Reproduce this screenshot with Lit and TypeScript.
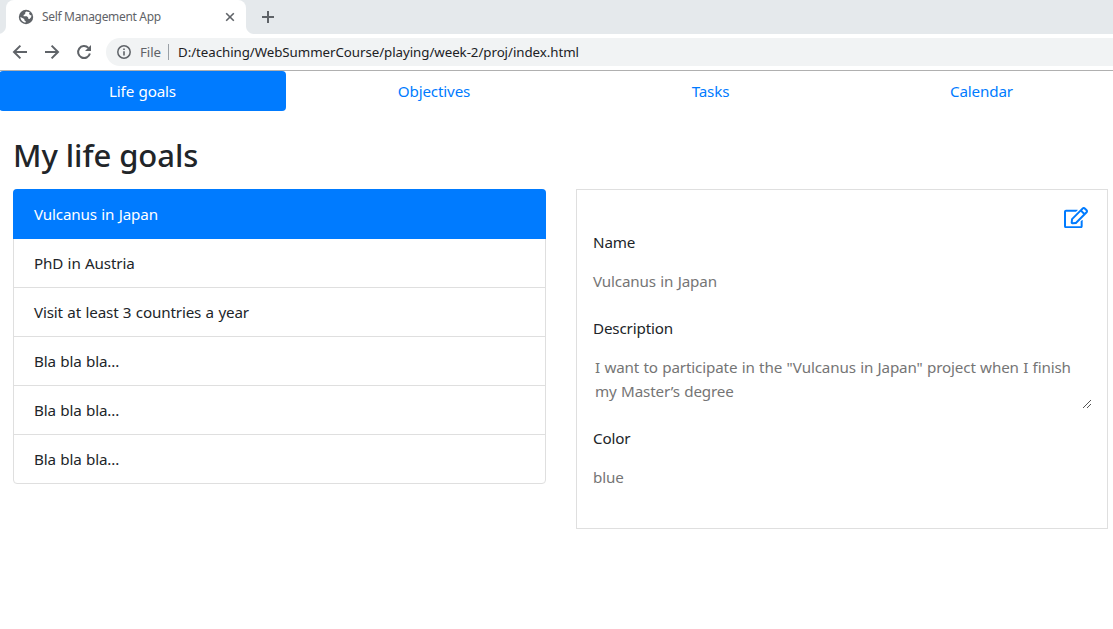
import { LitElement, html, css } from "lit";
import { customElement, state } from "lit/decorators.js";
import { classMap } from "lit/directives/class-map.js";

@customElement("browser-bar")
class BrowserBar extends LitElement {
  static styles = css`
    :host { display: block; height: 71px; box-sizing: border-box; border-bottom: 1px solid #b0b0b0; background: #fff;
      font-family: "Noto Sans", "Open Sans", sans-serif; letter-spacing: 0; word-spacing: 0; }
    .strip { display: flex; height: 34px; background: #e5e9ec; align-items: stretch; }
    .tab { box-sizing: border-box; width: 240px; background: #fff; border-radius: 8px 8px 0 0; display: flex; align-items: center; padding: 0 11px 0 12px; }
    .corner { align-self: flex-end; height: 8px; width: 6px; background: radial-gradient(circle at -2px 0, #e5e9ec 7.5px, #fff 8.5px); }
    .corner-right { align-self: flex-end; height: 8px; width: 8px; background: radial-gradient(circle at 8px 0, #e5e9ec 7.5px, #fff 8.5px); }
    .title { margin-left: 8px; flex: 1; font-size: 12px; color: #5f6368; letter-spacing: -0.32px; white-space: nowrap; }
    .plus { margin: 11px 0 0 8px; }
    svg { display: block; flex: none; }
    .toolbar { display: flex; height: 36px; align-items: center; padding-left: 12px; }
    .nav { margin-right: 16px; }
    .address { flex: 1; height: 28px; background: #f1f3f4; border-radius: 14px 0 0 14px; display: flex; align-items: center; padding-left: 10px; font-size: 13.3px; margin-left: -2px; white-space: nowrap; }
    .scheme { margin-left: 8px; color: #5f6368; width: 20px; letter-spacing: -0.1px; }
    .rule { width: 1px; height: 16px; background: #9aa0a6; margin: 0 9px 0 8px; }
    .url { color: #202124; letter-spacing: -0.05px; }
  `;

  render() {
    return html`
      <div class="strip">
        <div class="corner"></div>
        <div class="tab">
          <svg width="16" height="16" viewBox="0 0 16 16">
            <circle cx="8" cy="8" r="7.2" fill="#5f6368" />
            <path d="M8.3 2.4 7.2 3.6v1.5L5.6 6v1.3h3.2l1.4 1.3v1.2l1.3.3 1.6-1.9.4-1.8-1.5-.3-1-1.3.8-1.5zM2.4 8l3.9 2v1.2l1.4 1v1.4C4.8 13.4 2.4 11 2.4 8z" fill="#fff" />
          </svg>
          <span class="title">Self Management App</span>
          <svg width="10" height="10" viewBox="0 0 10 10"><path d="M1.2 1.2 8.8 8.8M8.8 1.2 1.2 8.8" stroke="#5f6368" stroke-width="1.6" /></svg>
        </div>
        <div class="corner-right"></div>
        <svg class="plus" width="12" height="12" viewBox="0 0 12 12"><path d="M6 0v12M0 6h12" stroke="#5f6368" stroke-width="2" /></svg>
      </div>
      <div class="toolbar">
        <svg class="nav" width="16" height="16" viewBox="0 0 16 16"><path d="M15 8H2.5M8.4 1.6 2 8l6.4 6.4" fill="none" stroke="#5f6368" stroke-width="2" /></svg>
        <svg class="nav" width="16" height="16" viewBox="0 0 16 16"><path d="M1 8h12.5M7.6 1.6 14 8l-6.4 6.4" fill="none" stroke="#5f6368" stroke-width="2" /></svg>
        <svg class="nav" width="16" height="16" viewBox="0 0 16 16">
          <path d="M13.9 9.6A6 6 0 1 1 12.4 3.9" fill="none" stroke="#5f6368" stroke-width="2" /><path d="M15 1v6H9z" fill="#5f6368" />
        </svg>
        <div class="address">
          <svg width="16" height="16" viewBox="0 0 16 16">
            <circle cx="8" cy="8" r="6.2" fill="none" stroke="#5f6368" stroke-width="1.5" /><path d="M8 7.2v4.2M8 4.5v1.6" stroke="#5f6368" stroke-width="1.6" />
          </svg>
          <span class="scheme">File</span><span class="rule"></span>
          <span class="url">D:/teaching/WebSummerCourse/playing/week-2/proj/index.html</span>
        </div>
      </div>`;
  }
}

@customElement("goal-details")
class GoalDetails extends LitElement {
  static styles = css`
    :host { display: block; box-sizing: border-box; height: 340px; border: 1px solid #dfdfdf; padding: 17px 16px 0 16px; line-height: 24px; }
    .actions { display: flex; justify-content: flex-end; height: 23px; padding-right: 3px; }
    .label { height: 24px; color: #212529; }
    .value { color: #757575; height: 24px; margin: 15px 0 23px; }
    .area { color: #757575; display: flex; justify-content: space-between; align-items: flex-end; height: 54px; margin: 14px 0 18px; }
    .copy { align-self: flex-start; padding: 1px 0 0 2px; white-space: nowrap; }
    svg { display: block; flex: none; }
  `;

  render() {
    return html`
      <div class="actions">
        <svg width="24" height="21.33" viewBox="0 0 576 512"><path fill="#007bff" d="M402.3 344.9l32-32c5-5 13.7-1.5 13.7 5.7V464c0 26.5-21.5 48-48 48H48c-26.5 0-48-21.5-48-48V112c0-26.5 21.5-48 48-48h273.5c7.1 0 10.7 8.6 5.7 13.7l-32 32c-1.5 1.5-3.5 2.3-5.7 2.3H48v352h352V350.5c0-2.1.8-4.1 2.3-5.6zm156.6-201.8L296.3 405.7l-90.4 10c-26.2 2.9-48.5-19.2-45.6-45.6l10-90.4L432.9 17.1c22.9-22.9 59.9-22.9 82.7 0l43.2 43.2c22.9 22.9 22.9 60 .1 82.8zM460.1 174L402 115.9 216.2 301.8l-7.3 65.3 65.3-7.3L460.1 174zm64.8-79.7l-43.2-43.2c-4.1-4.1-10.8-4.1-14.8 0L436 82l58.1 58.1 30.9-30.9c4-4.2 4-10.8-.1-14.9z" /></svg>
      </div>
      <div class="label">Name</div>
      <div class="value">Vulcanus in Japan</div>
      <div class="label">Description</div>
      <div class="area">
        <div class="copy">I want to participate in the "Vulcanus in Japan" project when I finish<br />my Master’s degree</div>
        <svg width="8" height="8" viewBox="0 0 8 8"><path d="M0 8 8 0M4 8l4-4" stroke="#555" stroke-width="1" /></svg>
      </div>
      <div class="label">Color</div>
      <div class="value">blue</div>`;
  }
}

@customElement("app-root")
class AppRoot extends LitElement {
  static styles = css`
    :host { display: block; height: 629px; overflow: hidden; background: #fff; color: #212529;
      font: 15.2px/24px "Noto Sans", "Open Sans", sans-serif; letter-spacing: -0.15px; word-spacing: 0.6px; }
    nav { display: grid; grid-template-columns: 287px 296px 257px 285px; margin-left: -1px; height: 40px; }
    .link { color: #007bff; text-align: center; padding: 8px 0; border-radius: 4px; }
    .link.active { color: #fff; background: #007bff; }
    h1 { font-size: 31px; font-weight: 500; line-height: 38px; margin: 25px 13px 15px; letter-spacing: -0.05px; word-spacing: 0; }
    .columns { display: grid; grid-template-columns: 533px 532px; gap: 30px; padding-left: 13px; align-items: start; }
    .list { border: 1px solid #dfdfdf; border-radius: 4px; display: flex; flex-direction: column; }
    .item { padding: 12px 20px; border-top: 1px solid #dfdfdf; }
    .item.active { background: #007bff; color: #fff; margin: -1px -1px 0; padding: 13px 21px 12px; border: 0; border-radius: 4px 4px 0 0; height: 25px; }
    .item.active + .item { border-top: 0; }
  `;

  @state() private tab = 0;
  @state() private goal = 0;

  private tabs = ["Life goals", "Objectives", "Tasks", "Calendar"];
  private goals = ["Vulcanus in Japan", "PhD in Austria", "Visit at least 3 countries a year", "Bla bla bla...", "Bla bla bla...", "Bla bla bla..."];

  render() {
    return html`
      <browser-bar></browser-bar>
      <nav>${this.tabs.map((t, i) => html`<div class=${classMap({ link: true, active: i === this.tab })} @click=${() => (this.tab = i)}>${t}</div>`)}</nav>
      <h1>My life goals</h1>
      <div class="columns">
        <div class="list">${this.goals.map((g, i) => html`<div class=${classMap({ item: true, active: i === this.goal })} @click=${() => (this.goal = i)}>${g}</div>`)}</div>
        <goal-details></goal-details>
      </div>`;
  }
}
